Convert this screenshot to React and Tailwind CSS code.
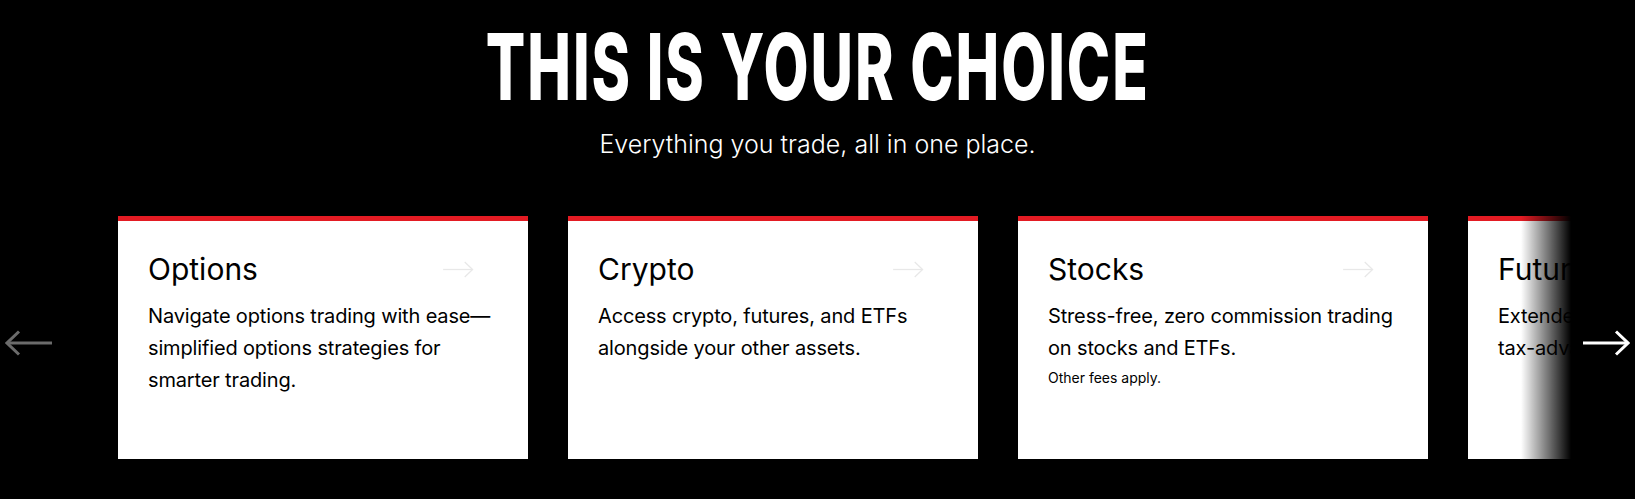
const cards = [
  {
    title: "Options",
    body: "Navigate options trading with ease—simplified options strategies for smarter trading.",
  },
  {
    title: "Crypto",
    body: "Access crypto, futures, and ETFs alongside your other assets.",
  },
  {
    title: "Stocks",
    body: "Stress-free, zero commission trading on stocks and ETFs.",
    note: "Other fees apply.",
  },
  {
    title: "Futures",
    body: "Extended market hours and potential tax-advantaged treatment.",
  },
];

function Arrow({ className, strokeWidth = 3 }) {
  return (
    <svg viewBox="0 0 47 26" fill="none" className={className}>
      <line x1="0" y1="13" x2="45" y2="13" stroke="currentColor" strokeWidth={strokeWidth} />
      <polyline points="33,1.5 45,13 33,24.5" stroke="currentColor" strokeWidth={strokeWidth} />
    </svg>
  );
}

function Card({ card }) {
  return (
    <div className="w-[410px] h-[243px] shrink-0 bg-white border-t-[5px] border-[#e31b23] p-[30px]">
      <div className="flex items-center justify-between">
        <h3 className="text-[30px] leading-[36px] text-black">{card.title}</h3>
        <Arrow className="w-[31px] h-[17px] mr-[24px] text-[#e8e8e8]" strokeWidth={2} />
      </div>
      <p className="mt-[13px] text-[20px] leading-[32px] tracking-[-0.15px] text-black">{card.body}</p>
      {card.note && <p className="text-[14px] leading-[28px] text-black">{card.note}</p>}
    </div>
  );
}

export default function App() {
  return (
    <section className="w-full h-[499px] bg-black overflow-hidden font-['Inter',sans-serif]">
      {/* Heading */}
      <div className="flex flex-col items-center pt-[21px]">
        <h2 className="text-[92px] leading-[91px] font-extrabold text-white tracking-[3px] scale-x-[0.635] whitespace-nowrap">
          THIS IS YOUR CHOICE
        </h2>
        <p className="mt-[16px] text-[25px] leading-[32px] font-light text-white">
          Everything you trade, all in one place.
        </p>
      </div>

      {/* Carousel */}
      <div className="flex items-center mt-[56px] pl-[5px]">
        <button className="mt-[10px] w-[47px] shrink-0 text-[#6b6b6b]">
          <Arrow className="w-[47px] h-[26px] rotate-180" />
        </button>
        <div className="relative ml-[66px] w-[1453px] shrink-0 overflow-hidden">
          <div className="flex gap-10">
            {cards.map((c) => (
              <Card key={c.title} card={c} />
            ))}
          </div>
          <div className="absolute right-0 top-0 bottom-0 w-[50px] bg-gradient-to-r from-transparent to-black" />
        </div>
        <button className="mt-[10px] ml-[12px] w-[47px] shrink-0 text-white">
          <Arrow className="w-[47px] h-[26px]" />
        </button>
      </div>
    </section>
  );
}
